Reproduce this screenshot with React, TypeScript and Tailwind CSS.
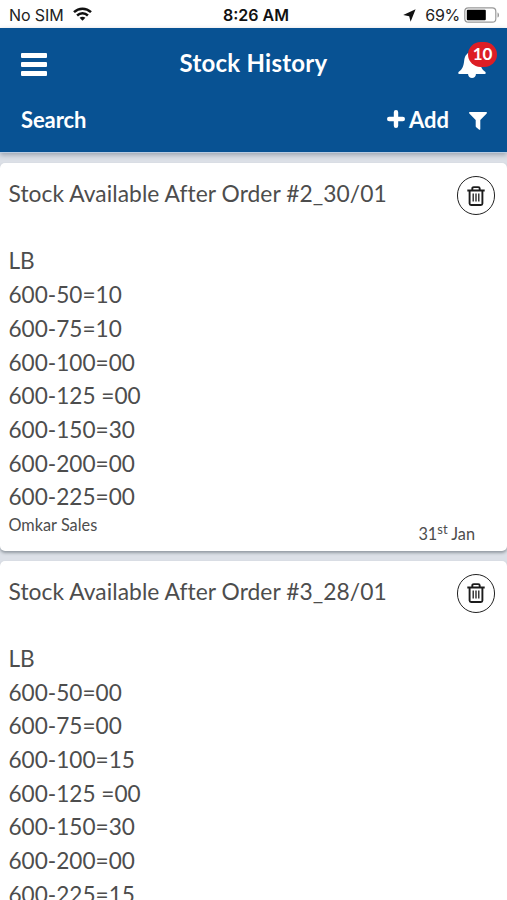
import React from "react";

type Stock = {
  title: string;
  lines: string[];
  footer?: { author: string; day: string; suffix: string; month: string };
};

const stocks: Stock[] = [
  {
    title: "Stock Available After Order #2_30/01",
    lines: ["LB", "600-50=10", "600-75=10", "600-100=00", "600-125 =00", "600-150=30", "600-200=00", "600-225=00"],
    footer: { author: "Omkar Sales", day: "31", suffix: "st", month: "Jan" },
  },
  {
    title: "Stock Available After Order #3_28/01",
    lines: ["LB", "600-50=00", "600-75=00", "600-100=15", "600-125 =00", "600-150=30", "600-200=00", "600-225=15"],
  },
];

function StatusBar() {
  return (
    <div className="grid h-7 shrink-0 grid-cols-[1fr_auto_1fr] items-center bg-white pt-[2px] pr-[7px] pl-[9px] font-['Inter','Liberation_Sans',sans-serif] text-[16px] leading-none text-[#222]">
      <div className="flex items-center gap-[9px]">
        <span className="tracking-[-0.1px]">No SIM</span>
        <svg width="19" height="14" viewBox="0 0 19 14" fill="none" stroke="#111" strokeWidth="2.5" className="-mt-[3px]">
          <path d="M1 5.1C5.8.5 13.2.5 18 5.1" />
          <path d="M4.1 8.5c3.1-2.9 7.7-2.9 10.8 0" />
          <path d="M6.6 10.8c1.8-1.5 4-1.5 5.8 0L9.5 13.8z" fill="#111" stroke="none" />
        </svg>
      </div>
      <span className="ml-[3px] text-[16px] font-semibold text-[#111]">8:26 AM</span>
      <div className="flex items-center justify-end">
        <svg width="13" height="13" viewBox="0 0 13 13" className="mr-[9px]">
          <path d="M12.6.3 7.6 12.7 6.200 7.300.2 6z" fill="#111" />
        </svg>
        <span className="mr-1 tracking-[-0.3px]">69%</span>
        <svg width="36" height="16" viewBox="0 0 36 16">
          <rect x=".8" y=".8" width="31" height="14.4" rx="3.5" fill="none" stroke="#999" strokeWidth="1.2" />
          <rect x="2.8" y="2.8" width="19" height="10.4" rx="1" fill="#000" />
          <path d="M33.5 5.400c2 .6 2 4.600 0 5.200z" fill="#999" />
        </svg>
      </div>
    </div>
  );
}

function Header() {
  return (
    <header className="h-[125px] shrink-0 border-b border-[#b9cbe0] bg-[#085293] text-white shadow-[0_2px_5px_rgba(60,70,90,0.4)]">
      <div className="grid h-[69px] grid-cols-[1fr_auto_1fr] items-center pr-[21px] pl-[21px]">
        <svg width="26" height="23" viewBox="0 0 26 23" fill="#fff" className="mt-1">
          <rect width="26" height="5" rx="1" />
          <rect y="9" width="26" height="5" rx="1" />
          <rect y="18" width="26" height="5" rx="1" />
        </svg>
        <h1 className="text-[24px] font-bold tracking-[0.25px]">Stock History</h1>
        <div className="relative justify-self-end">
          <svg width="28" height="28" viewBox="0 0 28 28" fill="#fff" className="mt-[6px]">
            <path d="M14 0C9.5 0 6.800 3.500 6.200 8.500 5.600 14 4.500 17 .8 19.800c-.9.9-.6 2.200.700 2.200h25c1.300 0 1.600-1.300.7-2.200C23.500 17 22.400 14 21.800 8.500 21.200 3.500 18.500 0 14 0z" />
            <path d="M10 21.500h8c0 6-8 6-8 0z" />
          </svg>
          <span className="absolute -top-[4px] left-[10px] flex h-[25px] w-[29px] items-center justify-center rounded-full bg-[#dd1e25] pb-px text-[17px] font-bold">
            10
          </span>
        </div>
      </div>
      <div className="flex h-[44px] items-center pr-5 pl-[21px] text-[22px] font-bold">
        <span className="tracking-[-0.1px]">Search</span>
        <svg width="18" height="18" viewBox="0 0 18 18" className="mr-1 ml-auto">
          <path d="M9 2.200v13.600M2.200 9h13.600" stroke="#fff" strokeWidth="4.400" strokeLinecap="round" />
        </svg>
        <span>Add</span>
        <svg width="18" height="18" viewBox="0 0 18 18" className="mt-[3px] ml-5" fill="#fff">
          <path d="M.8 0h16.400c.8 0 1 .9.500 1.400L11.300 8v9c0 .9-.8 1.100-1.400.6l-2.700-2.300a1.500 1.500 0 0 1-.5-1.100V8L.3 1.400C-.2.9 0 0 .8 0z" />
        </svg>
      </div>
    </header>
  );
}

function TrashButton() {
  return (
    <button aria-label="Delete" className="-mt-[1px] flex h-[39px] w-[38px] shrink-0 items-center justify-center rounded-full border-[1.500px] border-[#222]">
      <svg width="18" height="20" viewBox="0 0 18 20" fill="none" stroke="#1c1c1c">
        <path d="M.3 4.500h17.400" strokeWidth="2" />
        <path d="M5.300 4V2.600c0-.9.6-1.500 1.500-1.500h4.400c.9 0 1.500.6 1.500 1.500V4" strokeWidth="1.900" />
        <path d="M2.600 5v12.500c0 1 .6 1.500 1.500 1.500h9.800c.9 0 1.500-.5 1.500-1.500V5" strokeWidth="1.900" />
        <path d="M6.200 7.500v8M9 7.500v8M11.800 7.500v8" strokeWidth="1.300" />
      </svg>
    </button>
  );
}

function StockCard({ stock }: { stock: Stock }) {
  return (
    <article className="h-[388px] shrink-0 rounded-[5px] bg-white pt-[14px] pr-3 pl-[8.500px] text-[#4d4d4d] shadow-[0_2px_3px_rgba(60,70,80,0.45)]">
      <div className="flex h-[67.400px] items-start justify-between">
        <h2 className="text-[22.800px] leading-[33.700px] tracking-[0.050px] whitespace-nowrap">{stock.title}</h2>
        <TrashButton />
      </div>
      <div className="text-[22.600px] leading-[33.700px]">
        {stock.lines.map((line) => (
          <p key={line}>{line}</p>
        ))}
      </div>
      {stock.footer && (
        <div className="-mt-px flex items-start justify-between pr-5 text-[16.300px] leading-6">
          <span>{stock.footer.author}</span>
          <span className="pt-[9px]">
            {stock.footer.day}
            <sup className="text-[13px]">{stock.footer.suffix}</sup> {stock.footer.month}
          </span>
        </div>
      )}
    </article>
  );
}

export default function App() {
  return (
    <div className="flex h-[900px] w-[507px] flex-col overflow-hidden bg-[#dce0e7] font-['Lato',sans-serif]">
      <StatusBar />
      <Header />
      <main className="flex shrink-0 flex-col gap-[9.500px] pt-[10px]">
        {stocks.map((stock) => (
          <StockCard key={stock.title} stock={stock} />
        ))}
      </main>
    </div>
  );
}
